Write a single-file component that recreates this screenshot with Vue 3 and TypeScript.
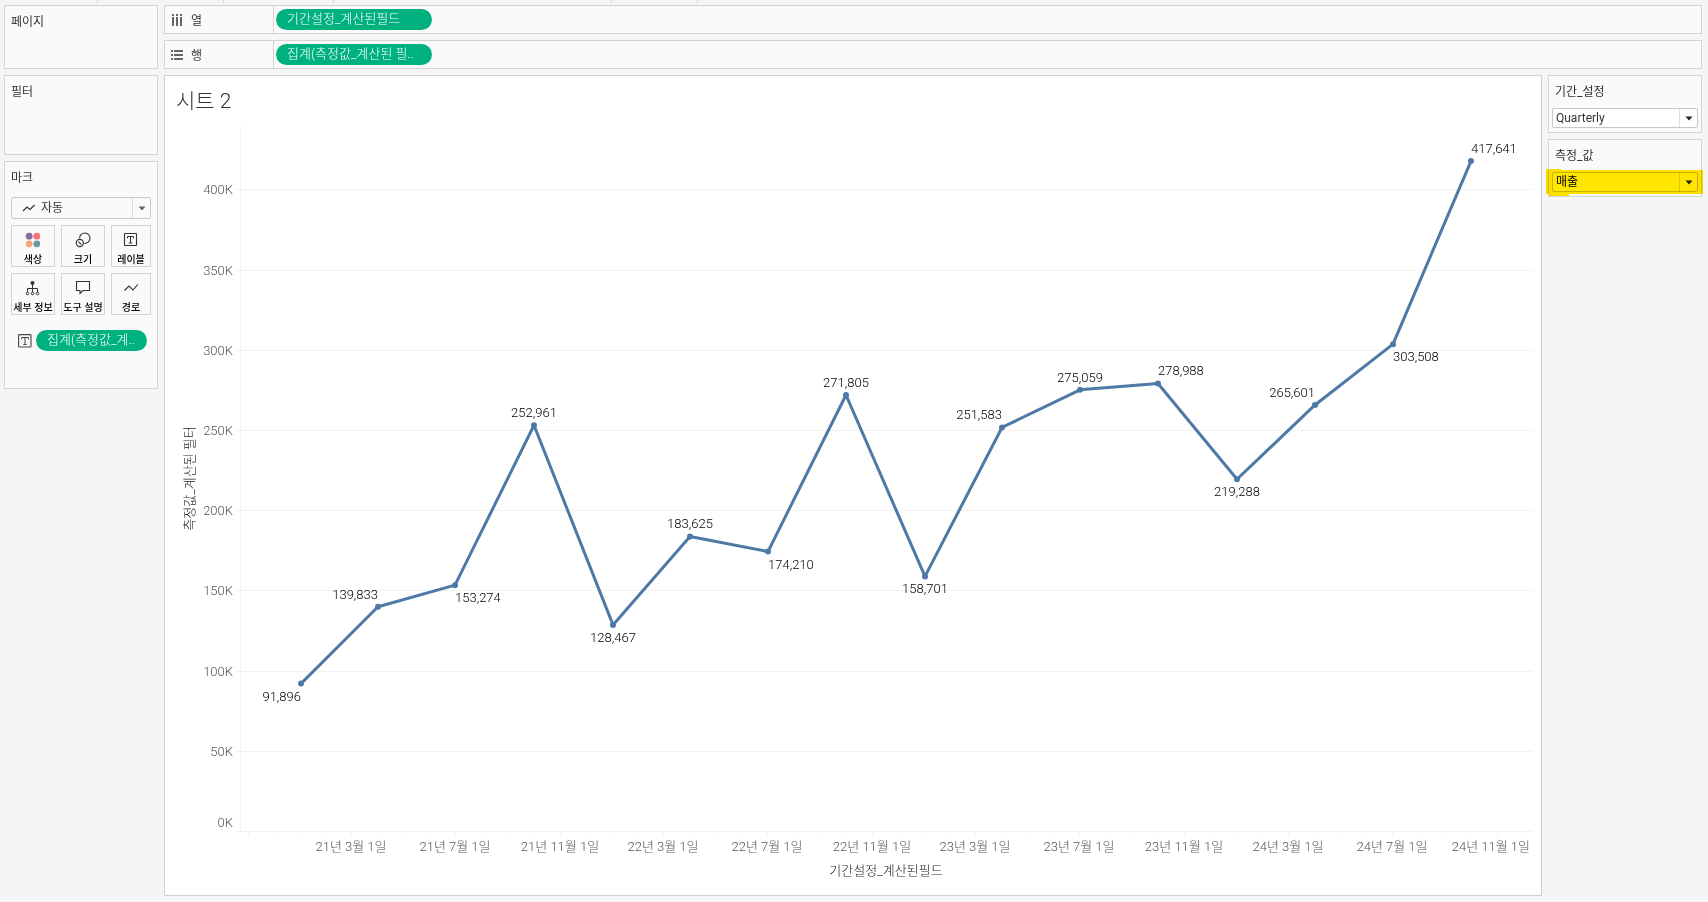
<script setup lang="ts">
import { computed, onBeforeUnmount, onMounted, ref } from 'vue'

type Anchor = 'start' | 'middle' | 'end'
interface Quarter {
  date: number
  value: number
  anchor: Anchor
  above: boolean
}

const DAY = 86400000
const PLOT_LEFT = 75
const PLOT_RIGHT_GAP = 9
const PLOT_BOTTOM_GAP = 64
const Y_MAX = 439500
const X_START = Date.UTC(2021, 2, 1) - 130 * DAY
const X_END = Date.UTC(2021, 2, 1) + 1381 * DAY

const quarter = (i: number, value: number, anchor: Anchor, above: boolean): Quarter => ({
  date: Date.UTC(2021, i * 3, 1),
  value,
  anchor,
  above,
})

const data: Quarter[] = [
  quarter(0, 91896, 'end', false),
  quarter(1, 139833, 'end', true),
  quarter(2, 153274, 'start', false),
  quarter(3, 252961, 'middle', true),
  quarter(4, 128467, 'middle', false),
  quarter(5, 183625, 'middle', true),
  quarter(6, 174210, 'start', false),
  quarter(7, 271805, 'middle', true),
  quarter(8, 158701, 'middle', false),
  quarter(9, 251583, 'end', true),
  quarter(10, 275059, 'middle', true),
  quarter(11, 278988, 'start', true),
  quarter(12, 219288, 'middle', false),
  quarter(13, 265601, 'end', true),
  quarter(14, 303508, 'start', false),
  quarter(15, 417641, 'start', true),
]

const chart = ref<SVGSVGElement | null>(null)
const width = ref(1376)
const height = ref(769)
let observer: ResizeObserver | undefined

function measure() {
  if (!chart.value) return
  const box = chart.value.getBoundingClientRect()
  width.value = Math.round(box.width)
  height.value = Math.round(box.height)
}

onMounted(() => {
  measure()
  observer = new ResizeObserver(measure)
  if (chart.value) observer.observe(chart.value)
})
onBeforeUnmount(() => observer?.disconnect())

const bottom = computed(() => height.value - PLOT_BOTTOM_GAP)
const right = computed(() => width.value - PLOT_RIGHT_GAP)
const xOf = (t: number) => PLOT_LEFT + ((t - X_START) / (X_END - X_START)) * (right.value - PLOT_LEFT)
const yOf = (v: number) => bottom.value - (v / Y_MAX) * bottom.value

const points = computed(() =>
  data.map((d) => ({ ...d, x: Math.round(xOf(d.date)), y: yOf(d.value), text: d.value.toLocaleString('en-US') })),
)
const line = computed(() => points.value.map((p) => `${p.x},${p.y}`).join(' '))

const yTicks = computed(() =>
  Array.from({ length: 9 }, (_, i) => {
    const y = Math.round(yOf(i * 50000))
    return { y, labelY: Math.min(y + 5, bottom.value - 4), text: `${i * 50}K` }
  }),
)

const xTicks = computed(() =>
  Array.from({ length: 50 }, (_, i) => {
    const t = Date.UTC(2020, 10 + i, 1)
    const d = new Date(t)
    const major = i % 4 === 0
    return {
      x: Math.floor(xOf(t)),
      major,
      last: i === 48,
      text: major && i > 0 ? `${d.getUTCFullYear() - 2000}년 ${d.getUTCMonth() + 1}월 1일` : '',
    }
  }),
)

const period = ref('Quarterly')
const measureName = ref('매출')
const markType = ref('자동')
</script>

<template>
  <div class="app">
    <div class="toolbar-edge" aria-hidden="true">
      <span class="seg s1"></span><span class="seg s2"></span><span class="seg s3"></span>
      <span class="seg s4"></span><span class="seg s5"></span>
    </div>

    <div class="workspace">
      <aside class="cards">
        <section class="card pages"><h2>페이지</h2></section>
        <section class="card filters"><h2>필터</h2></section>
        <section class="card marks">
          <h2><label for="mark-type">마크</label></h2>
          <div class="mark-select">
            <svg class="lead" width="14" height="8" viewBox="0 0 14 8">
              <path d="M1 7 L5 3 L8 5.5 L12.5 1" fill="none" stroke="#333" stroke-width="1.2" />
            </svg>
            <select id="mark-type" v-model="markType">
              <option>자동</option>
            </select>
            <span class="arrow"><svg width="8" height="5" viewBox="0 0 8 5"><path d="M0.500 0.500 H7.500 L4 4.500 Z" fill="#666" /></svg></span>
          </div>

          <div class="mark-grid">
            <button type="button">
              <svg width="16" height="16" viewBox="0 0 16 16">
                <circle cx="4.200" cy="4.200" r="3.400" fill="#866d97" />
                <circle cx="11.800" cy="4.200" r="3.400" fill="#fb6f7e" />
                <circle cx="4.200" cy="11.800" r="3.400" fill="#f6a67d" />
                <circle cx="11.800" cy="11.800" r="3.400" fill="#6f98a6" />
              </svg>
              <span>색상</span>
            </button>
            <button type="button">
              <svg width="16" height="16" viewBox="0 0 16 16" fill="none" stroke="#333" stroke-width="1.1">
                <path d="M4.600 6.200 A5.200 5.200 0 1 1 9.300 11.400" />
                <circle cx="4.800" cy="11" r="3.600" />
                <path d="M3.300 9.600 L6.500 12.700" />
              </svg>
              <span>크기</span>
            </button>
            <button type="button">
              <svg width="16" height="16" viewBox="0 0 16 16" fill="none" stroke="#333">
                <rect x="1.500" y="1.500" width="12" height="12" rx="0.800" stroke-width="1.100" />
                <path d="M4.500 6.300 V4.500 H10.500 V6.300 M7.500 4.500 V11 M5.800 11 H9.200" />
              </svg>
              <span>레이블</span>
            </button>
            <button type="button">
              <svg width="16" height="16" viewBox="0 0 16 16" fill="none" stroke="#333">
                <circle cx="7.500" cy="3" r="2" fill="#333" stroke="none" />
                <path d="M7.500 4 V12 M2.500 12 V8.500 H12.500 V12" />
                <circle cx="2.500" cy="13.500" r="1.300" fill="#fafafa" />
                <circle cx="7.500" cy="13.500" r="1.300" fill="#fafafa" />
                <circle cx="12.500" cy="13.500" r="1.300" fill="#fafafa" />
              </svg>
              <span>세부 정보</span>
            </button>
            <button type="button">
              <svg width="16" height="16" viewBox="0 0 16 16" fill="none" stroke="#333" stroke-width="1.100">
                <path d="M1.500 1.500 H14.500 V10.500 H8 L5 13.500 V10.500 H1.500 Z" />
              </svg>
              <span>도구 설명</span>
            </button>
            <button type="button">
              <svg width="16" height="16" viewBox="0 0 16 16" fill="none" stroke="#333" stroke-width="1.100">
                <path d="M1.500 10.500 L6 6 L10 10 L14.800 4.500" />
              </svg>
              <span>경로</span>
            </button>
          </div>

          <div class="mark-field">
            <svg width="14" height="14" viewBox="0 0 14 14" fill="none" stroke="#444">
              <rect x="0.600" y="0.600" width="12.400" height="12.400" rx="0.800" stroke-width="1.100" />
              <path d="M3.500 5.300 V3.500 H10.500 V5.300 M7 3.500 V10.500 M5.300 10.500 H8.700" />
            </svg>
            <button type="button" class="pill">집계(측정값_계..</button>
          </div>
        </section>
      </aside>

      <main class="main">
        <section class="shelf">
          <div class="shelf-name">
            <svg width="12" height="12" viewBox="0 0 12 12" fill="#666">
              <path d="M1 0 h2 v2 h-2z M1 3 h2 v9 h-2z M5 0 h2 v2 h-2z M5 3 h2 v9 h-2z M9 0 h2 v2 h-2z M9 3 h2 v9 h-2z" />
            </svg>
            <span>열</span>
          </div>
          <button type="button" class="pill wide">기간설정_계산된필드</button>
        </section>
        <section class="shelf">
          <div class="shelf-name">
            <svg width="12" height="12" viewBox="0 0 12 12" fill="#666">
              <path d="M0 1 h2 v2 h-2z M3 1 h9 v2 h-9z M0 5 h2 v2 h-2z M3 5 h9 v2 h-9z M0 9 h2 v2 h-2z M3 9 h9 v2 h-9z" />
            </svg>
            <span>행</span>
          </div>
          <button type="button" class="pill wide">집계(측정값_계산된 필..</button>
        </section>

        <div class="stage">
          <section class="sheet">
            <h1>시트 2</h1>
            <svg ref="chart" class="chart" role="img" aria-label="시트 2">
              <g class="grid">
                <rect v-for="t in yTicks" :key="t.text" x="70" :y="t.y" :width="right - 70" height="1" />
                <rect :x="PLOT_LEFT" y="0" width="1" :height="bottom" />
                <rect
                  v-for="t in xTicks"
                  :key="t.x"
                  :x="t.x"
                  :y="bottom + 1"
                  width="1"
                  :height="t.major ? 4 : 1"
                />
              </g>
              <g class="tick">
                <text v-for="t in yTicks" :key="t.text" x="68" :y="t.labelY" text-anchor="end">{{ t.text }}</text>
                <template v-for="t in xTicks" :key="t.x">
                  <text
                    v-if="t.text"
                    :x="t.last ? right - 2 : t.x"
                    :y="bottom + 20"
                    :text-anchor="t.last ? 'end' : 'middle'"
                  >{{ t.text }}</text>
                </template>
              </g>
              <g class="axis-title">
                <text :x="(PLOT_LEFT + right) / 2" :y="bottom + 44" text-anchor="middle">기간설정_계산된필드</text>
                <text :transform="`translate(29 ${bottom / 2}) rotate(-90)`" text-anchor="middle">측정값_계산된 필터</text>
              </g>
              <polyline class="line" :points="line" />
              <g class="dots">
                <circle v-for="p in points" :key="p.date" :cx="p.x" :cy="p.y" r="3" />
              </g>
              <g class="labels">
                <text
                  v-for="p in points"
                  :key="p.date"
                  :x="p.x"
                  :y="p.above ? p.y - 8 : p.y + 17"
                  :text-anchor="p.anchor"
                >{{ p.text }}</text>
              </g>
            </svg>
          </section>

          <aside class="params">
            <section class="card param">
              <h2><label for="period">기간_설정</label></h2>
              <div class="param-select">
                <select id="period" v-model="period">
                  <option>Quarterly</option>
                </select>
                <span class="arrow"><svg width="8" height="5" viewBox="0 0 8 5"><path d="M0.500 0.500 H7.500 L4 4.500 Z" fill="#222" /></svg></span>
              </div>
            </section>
            <section class="card param">
              <h2><label for="measure">측정_값</label></h2>
              <div class="param-select">
                <select id="measure" v-model="measureName" class="dark">
                  <option>매출</option>
                </select>
                <span class="arrow"><svg width="8" height="5" viewBox="0 0 8 5"><path d="M0.500 0.500 H7.500 L4 4.500 Z" fill="#222" /></svg></span>
              </div>
              <svg class="marker" viewBox="0 0 157 27" preserveAspectRatio="none" aria-hidden="true">
                <path d="M0 0 H15 V1 H157 V25 H23 V27 H3 V25 H0 Z" fill="#ffe600" />
              </svg>
            </section>
          </aside>
        </div>
      </main>
    </div>
  </div>
</template>

<style>
body {
  background: #f5f5f5;
}
</style>

<style scoped>
.app {
  min-height: 100vh;
  display: flex;
  flex-direction: column;
  background: #f5f5f5;
  color: #333;
  font-family: Roboto, 'Noto Sans CJK KR', sans-serif;
  font-size: 12px;
}
.app *,
.app {
  box-sizing: border-box;
}
.toolbar-edge {
  display: flex;
  height: 5px;
}
.seg {
  height: 3px;
  border-right: 1px solid #d4d4d4;
}
.s1 { width: 98px; }
.s2 { width: 126px; }
.s3 { width: 110px; }
.s4 { width: 278px; }
.s5 { width: 86px; }

.workspace {
  flex: 1;
  display: flex;
  gap: 6px;
  padding: 0 6px 6px 4px;
}
.cards,
.params {
  display: flex;
  flex-direction: column;
  gap: 6px;
  flex: 0 0 154px;
}
.card {
  background: #fafafa;
  border: 1px solid #d4d4d4;
  padding: 6px;
}
.card h2 {
  margin: 0;
  font-size: 12px;
  font-weight: 400;
  line-height: 20px;
}
.pages { min-height: 64px; }
.filters { min-height: 80px; }
.marks { min-height: 228px; }

select {
  appearance: none;
  width: 100%;
  height: 100%;
  border: 0;
  margin: 0;
  outline: 0;
  background: transparent;
  font-family: inherit;
  font-size: 12px;
  color: #333;
}
.mark-select,
.param-select {
  position: relative;
  background: #fff;
  border: 1px solid #c8c8c8;
  border-radius: 2px;
}
.mark-select {
  height: 22px;
  margin-top: 9px;
  background: #fafafa;
}
.mark-select select { padding: 0 22px 0 29px; }
.lead {
  position: absolute;
  left: 10px;
  top: 6px;
}
.arrow {
  position: absolute;
  right: 0;
  top: 0;
  bottom: 0;
  width: 18px;
  border-left: 1px solid #ddd;
  display: flex;
  align-items: center;
  justify-content: center;
  pointer-events: none;
}
.mark-grid {
  display: grid;
  grid-template-columns: 44fr 44fr 40fr;
  gap: 6px;
  margin-top: 6px;
}
.mark-grid button {
  height: 42px;
  min-width: 0;
  padding: 6px 0 0;
  border: 1px solid #d4d4d4;
  background: #fafafa;
  display: flex;
  flex-direction: column;
  align-items: center;
  gap: 5px;
  font-family: inherit;
  font-size: 10px;
  font-weight: 500;
  line-height: 14px;
  color: #000;
  white-space: nowrap;
}
.mark-grid svg { flex: none; }
.mark-field {
  display: flex;
  align-items: center;
  gap: 4px;
  margin: 15px 4px 0 7px;
}
.mark-field svg { flex: none; }
.pill {
  flex: 1;
  height: 21px;
  padding: 0 11px 2px;
  border: 0;
  border-radius: 11px;
  background: #00b180;
  color: #fff;
  font-family: inherit;
  font-size: 13px;
  font-weight: 300;
  line-height: 19px;
  text-align: left;
  white-space: nowrap;
}
.pill.wide {
  flex: 0 0 156px;
  margin-left: 2px;
}

.main {
  flex: 1;
  min-width: 0;
  display: flex;
  flex-direction: column;
  gap: 6px;
}
.shelf {
  display: flex;
  align-items: center;
  height: 29px;
  border: 1px solid #d4d4d4;
  background: #fafafa;
}
.shelf-name {
  display: flex;
  align-items: center;
  gap: 8px;
  width: 109px;
  height: 100%;
  padding-left: 6px;
  border-right: 1px solid #d4d4d4;
}
.stage {
  flex: 1;
  display: flex;
  gap: 6px;
}
.sheet {
  flex: 1;
  min-width: 0;
  display: flex;
  flex-direction: column;
  background: #fff;
  border: 1px solid #d0d0d0;
}
.sheet h1 {
  margin: 0;
  height: 50px;
  padding: 0 11px;
  font-size: 21px;
  font-weight: 300;
  line-height: 50px;
}
.chart {
  display: block;
  width: 100%;
  flex: 1 1 0;
  min-height: 400px;
}
.grid { fill: #f2f2f2; }
.tick {
  font-size: 13px;
  font-weight: 300;
  fill: #555;
}
.axis-title {
  font-size: 13px;
  font-weight: 300;
  fill: #222;
}
.line {
  fill: none;
  stroke: #4e79a7;
  stroke-width: 3;
  stroke-linejoin: round;
}
.dots { fill: #4e79a7; }
.labels {
  font-size: 13px;
  font-weight: 300;
  fill: #000;
}

.param {
  position: relative;
  min-height: 58px;
  padding: 6px 3px 4px;
}
.param h2 {
  padding-left: 3px;
}
.param-select {
  height: 20px;
  margin-top: 6px;
}
.param-select select {
  padding: 0 22px 0 3px;
}
.param-select select.dark { color: #000; }
.marker {
  position: absolute;
  left: -3px;
  top: 29px;
  width: 157px;
  height: 27px;
  mix-blend-mode: multiply;
  pointer-events: none;
}
</style>
